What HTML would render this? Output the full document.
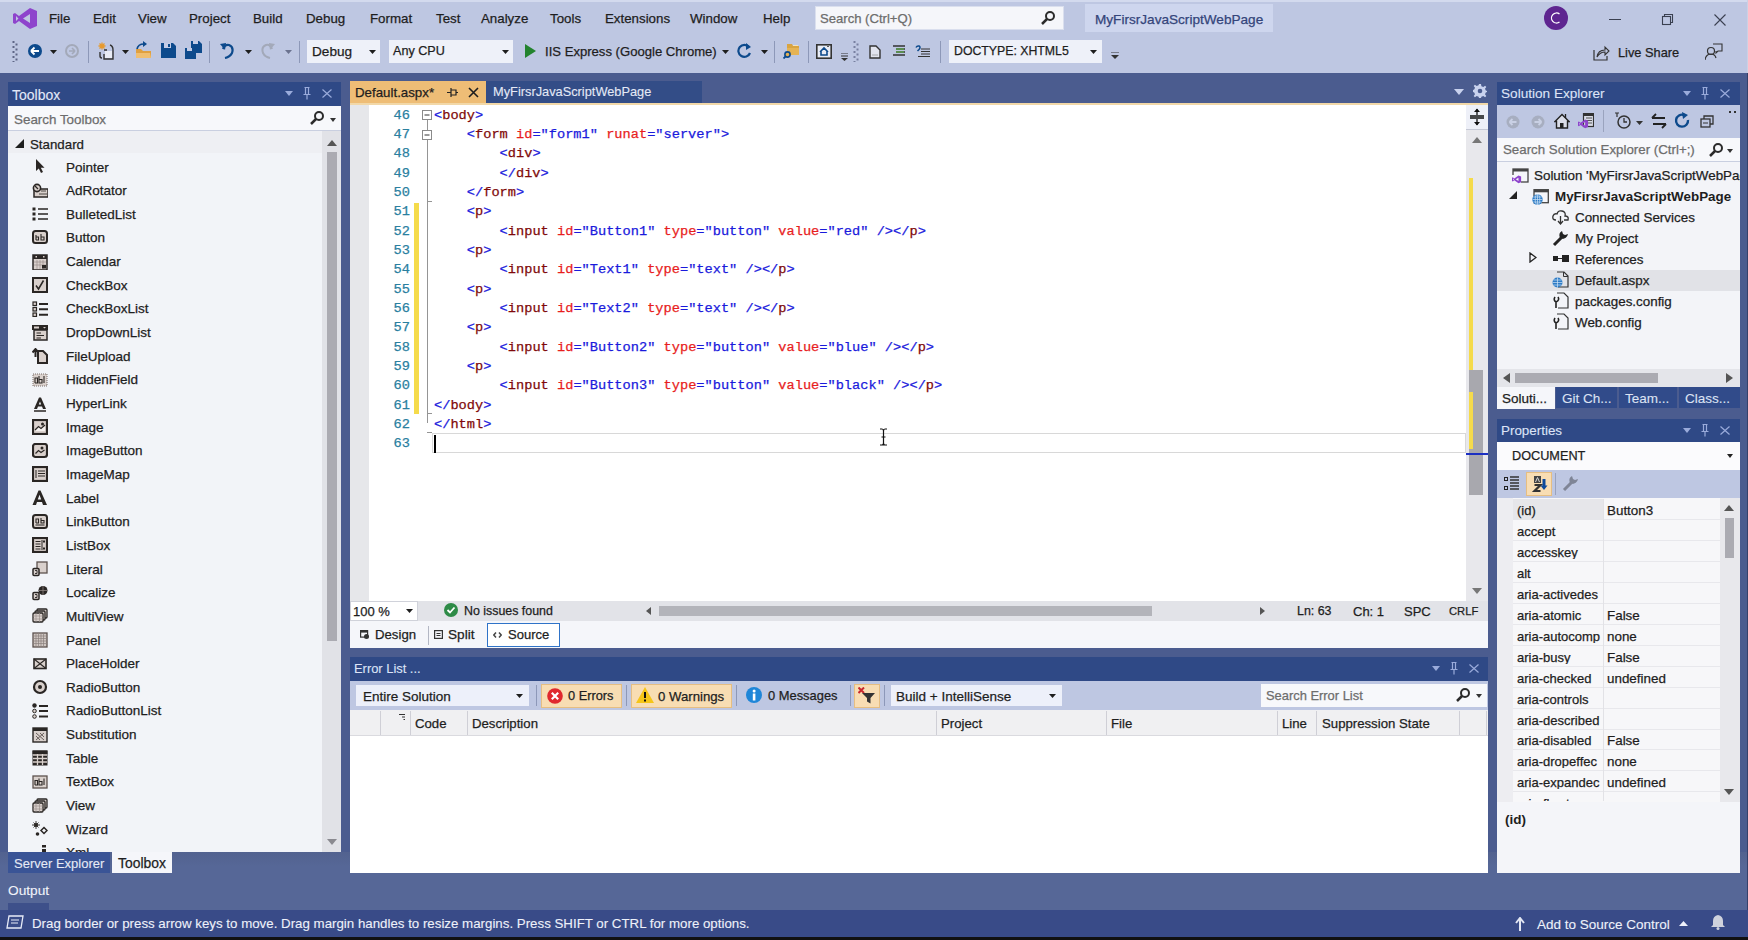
<!DOCTYPE html><html><head><meta charset="utf-8"><style>
html,body{margin:0;padding:0;width:1748px;height:940px;overflow:hidden;}
body{position:relative;background:#4B5C8F;font-family:"Liberation Sans",sans-serif;font-size:13px;color:#1E1E1E;}
.t{position:absolute;white-space:nowrap;line-height:1;-webkit-text-stroke:0.25px currentColor;}
.m{font-family:"Liberation Mono",monospace;}
</style></head><body>
<div style="position:absolute;left:0px;top:0px;width:1748px;height:73px;background:#BEC7E2;"></div>
<div style="position:absolute;left:0px;top:0px;width:1748px;height:2px;background:#D3DAEE;"></div>
<svg style="position:absolute;left:13px;top:7px;" width="25" height="23" viewBox="0 0 25 23"><path d="M17 1 L24 4 V19 L17 22 L6 14 L2 17 L0 16 V7 L2 6 L6 9 Z M17 7 L10 11.5 L17 16 Z M3 9 V14 L5.5 11.5 Z" fill="#8E44CC" fill-rule="evenodd"/></svg>
<div class="t" style="left:49px;top:12px;font-size:13.3px;color:#1E1E1E;">File</div>
<div class="t" style="left:93px;top:12px;font-size:13.3px;color:#1E1E1E;">Edit</div>
<div class="t" style="left:138px;top:12px;font-size:13.3px;color:#1E1E1E;">View</div>
<div class="t" style="left:189px;top:12px;font-size:13.3px;color:#1E1E1E;">Project</div>
<div class="t" style="left:253px;top:12px;font-size:13.3px;color:#1E1E1E;">Build</div>
<div class="t" style="left:306px;top:12px;font-size:13.3px;color:#1E1E1E;">Debug</div>
<div class="t" style="left:370px;top:12px;font-size:13.3px;color:#1E1E1E;">Format</div>
<div class="t" style="left:436px;top:12px;font-size:13.3px;color:#1E1E1E;">Test</div>
<div class="t" style="left:481px;top:12px;font-size:13.3px;color:#1E1E1E;">Analyze</div>
<div class="t" style="left:550px;top:12px;font-size:13.3px;color:#1E1E1E;">Tools</div>
<div class="t" style="left:605px;top:12px;font-size:13.3px;color:#1E1E1E;">Extensions</div>
<div class="t" style="left:690px;top:12px;font-size:13.3px;color:#1E1E1E;">Window</div>
<div class="t" style="left:763px;top:12px;font-size:13.3px;color:#1E1E1E;">Help</div>
<div style="position:absolute;left:815px;top:6px;width:249px;height:24px;background:#F5F6FA;border:1px solid #DADFEE;box-sizing:border-box;"></div>
<div class="t" style="left:820px;top:12px;color:#6D6D6D;font-size:13.1px;">Search (Ctrl+Q)</div>
<svg style="position:absolute;left:1040px;top:10px;" width="16" height="16" viewBox="0 0 16 16"><circle cx="10" cy="6" r="4" fill="none" stroke="#2B2B2B" stroke-width="2"/><path d="M7 9 L2 14" stroke="#2B2B2B" stroke-width="2.5"/></svg>
<div style="position:absolute;left:1085px;top:4px;width:188px;height:28px;background:#CED6EE;"></div>
<div class="t" style="left:1095px;top:13px;color:#34457A;font-size:13.6px;">MyFirsrJavaScriptWebPage</div>
<svg style="position:absolute;left:1544px;top:6px;" width="24" height="24" viewBox="0 0 24 24"><circle cx="12" cy="12" r="12" fill="#5E2590"/><path d="M15.5 8 A5 5 0 1 0 15.5 16" fill="none" stroke="#FFFFFF" stroke-width="1.3"/></svg>
<div style="position:absolute;left:1609px;top:19px;width:12px;height:1px;background:#3A4050;"></div>
<svg style="position:absolute;left:1661px;top:13px;" width="13" height="13" viewBox="0 0 13 13"><rect x="1.5" y="3.5" width="8" height="8" fill="none" stroke="#3A4050" stroke-width="1.1"/><path d="M3.5 3.5 V1.5 H11.5 V9.5 H9.5" fill="none" stroke="#3A4050" stroke-width="1.1"/></svg>
<svg style="position:absolute;left:1714px;top:14px;" width="12" height="12" viewBox="0 0 12 12"><path d="M0.5 0.5 L11.5 11.5 M11.5 0.5 L0.5 11.5" stroke="#3A4050" stroke-width="1.1"/></svg>
<svg style="position:absolute;left:12px;top:41px;" width="7" height="21" viewBox="0 0 7 21"><rect x="0.5" y="0.0" width="2" height="2" fill="#5E6686"/><rect x="3.5" y="2.5" width="2" height="2" fill="#5E6686"/><rect x="0.5" y="5.0" width="2" height="2" fill="#5E6686"/><rect x="3.5" y="7.5" width="2" height="2" fill="#5E6686"/><rect x="0.5" y="10.0" width="2" height="2" fill="#5E6686"/><rect x="3.5" y="12.5" width="2" height="2" fill="#5E6686"/><rect x="0.5" y="15.0" width="2" height="2" fill="#5E6686"/><rect x="3.5" y="17.5" width="2" height="2" fill="#5E6686"/><rect x="0.5" y="20.0" width="2" height="2" fill="#5E6686"/></svg>
<svg style="position:absolute;left:28px;top:44px;" width="14" height="14" viewBox="0 0 14 14"><circle cx="7" cy="7" r="7" fill="#0D4A8C"/><path d="M3 7 H11 M3 7 L6.5 3.5 M3 7 L6.5 10.5" stroke="#fff" stroke-width="1.8" fill="none"/></svg>
<svg style="position:absolute;left:50px;top:50px;" width="7" height="4" viewBox="0 0 7 4"><path d="M0 0 H7 L3.5 4 Z" fill="#1E1E1E"/></svg>
<svg style="position:absolute;left:65px;top:44px;" width="14" height="14" viewBox="0 0 14 14"><circle cx="7" cy="7" r="6" fill="none" stroke="#A3A9B9" stroke-width="2"/><path d="M4 7 H10 M10 7 L7 4 M10 7 L7 10" stroke="#A3A9B9" stroke-width="1.6" fill="none"/></svg>
<div style="position:absolute;left:88px;top:41px;width:1px;height:22px;background:#8D98B8;"></div>
<svg style="position:absolute;left:98px;top:42px;" width="16" height="18" viewBox="0 0 16 18"><path d="M4 0.5 V7.5 M0.5 4 H7.5 M1.5 1.5 L6.5 6.5 M6.5 1.5 L1.5 6.5" stroke="#E89A2C" stroke-width="1.3"/><path d="M6 8 H9 M12 3 Q15 4 15 8 V17 H6 V12" fill="none" stroke="#333" stroke-width="1.4"/><path d="M2 10 V14 Q2 16 4 16" stroke="#333" fill="none" stroke-width="1.4"/><rect x="7" y="9" width="7" height="7" fill="#E9ECF5"/></svg>
<svg style="position:absolute;left:122px;top:50px;" width="7" height="4" viewBox="0 0 7 4"><path d="M0 0 H7 L3.5 4 Z" fill="#1E1E1E"/></svg>
<svg style="position:absolute;left:135px;top:41px;" width="17" height="18" viewBox="0 0 17 18"><path d="M1 8 H6 L8 10 H16 V17 H1 Z" fill="#E0A040"/><path d="M1 12 H15 L16 17 H1 Z" fill="#F0BE70"/><path d="M2 8 Q3 3 9 3" stroke="#0D4A8C" fill="none" stroke-width="1.7"/><path d="M8 0 L12 3 L8 6 Z" fill="#0D4A8C"/></svg>
<svg style="position:absolute;left:161px;top:43px;" width="15" height="15" viewBox="0 0 15 15"><path d="M0 0 H12 L15 3 V15 H0 Z" fill="#0D4A8C"/><rect x="3" y="0" width="7" height="5" fill="#C4CDE7"/><rect x="7" y="1" width="2" height="3" fill="#0D4A8C"/></svg>
<svg style="position:absolute;left:185px;top:41px;" width="17" height="18" viewBox="0 0 17 18"><path d="M0 7 H9 L11 9 V18 H0 Z" fill="#0D4A8C"/><path d="M6 0 H14 L17 3 V12 H6 Z" fill="#0D4A8C"/><rect x="8" y="0" width="5" height="3" fill="#C4CDE7"/><rect x="2" y="7" width="5" height="3" fill="#C4CDE7"/></svg>
<div style="position:absolute;left:209px;top:41px;width:1px;height:22px;background:#8D98B8;"></div>
<svg style="position:absolute;left:220px;top:42px;" width="15" height="17" viewBox="0 0 15 17"><path d="M2.5 3 L5 9" stroke="#0D4A8C" stroke-width="0"/><path d="M3 7 Q5 2 9 3 Q14 5 12 11 Q10 15 5 16" stroke="#0D4A8C" stroke-width="2.2" fill="none"/><path d="M0 2 L6 1 L5 8 Z" fill="#0D4A8C"/></svg>
<svg style="position:absolute;left:245px;top:50px;" width="7" height="4" viewBox="0 0 7 4"><path d="M0 0 H7 L3.5 4 Z" fill="#1E1E1E"/></svg>
<svg style="position:absolute;left:260px;top:42px;" width="15" height="17" viewBox="0 0 15 17"><path d="M12 7 Q10 2 6 3 Q1 5 3 11 Q5 15 10 16" stroke="#A3A9B9" stroke-width="2" fill="none"/><path d="M15 2 L9 1 L10 8 Z" fill="#A3A9B9"/></svg>
<svg style="position:absolute;left:285px;top:50px;" width="7" height="4" viewBox="0 0 7 4"><path d="M0 0 H7 L3.5 4 Z" fill="#6B7390"/></svg>
<div style="position:absolute;left:299px;top:41px;width:1px;height:22px;background:#8D98B8;"></div>
<div style="position:absolute;left:307px;top:40px;width:73px;height:23px;background:#EEF1F9;"></div>
<div class="t" style="left:312px;top:45px;font-size:13.6px;">Debug</div>
<svg style="position:absolute;left:369px;top:50px;" width="7" height="4" viewBox="0 0 7 4"><path d="M0 0 H7 L3.5 4 Z" fill="#1E1E1E"/></svg>
<div style="position:absolute;left:389px;top:40px;width:124px;height:23px;background:#EEF1F9;"></div>
<div class="t" style="left:393px;top:45px;font-size:12.6px;">Any CPU</div>
<svg style="position:absolute;left:502px;top:50px;" width="7" height="4" viewBox="0 0 7 4"><path d="M0 0 H7 L3.5 4 Z" fill="#1E1E1E"/></svg>
<svg style="position:absolute;left:525px;top:44px;" width="11" height="14" viewBox="0 0 11 14"><path d="M0 0 L11 7 L0 14 Z" fill="#23832E"/></svg>
<div class="t" style="left:545px;top:45px;font-size:13.1px;">IIS Express (Google Chrome)</div>
<svg style="position:absolute;left:722px;top:50px;" width="7" height="4" viewBox="0 0 7 4"><path d="M0 0 H7 L3.5 4 Z" fill="#1E1E1E"/></svg>
<svg style="position:absolute;left:737px;top:43px;" width="15" height="16" viewBox="0 0 15 16"><path d="M12 4 A6 6 0 1 0 13 10" stroke="#0D4A8C" stroke-width="2.2" fill="none"/><path d="M9 0 L14 4 L9 7 Z" fill="#0D4A8C"/></svg>
<svg style="position:absolute;left:761px;top:50px;" width="7" height="4" viewBox="0 0 7 4"><path d="M0 0 H7 L3.5 4 Z" fill="#1E1E1E"/></svg>
<div style="position:absolute;left:774px;top:41px;width:1px;height:22px;background:#8D98B8;"></div>
<svg style="position:absolute;left:783px;top:43px;" width="16" height="16" viewBox="0 0 16 16"><path d="M4 1 H9 L10 3 H16 V12 H4 Z" fill="#D9A441"/><rect x="4" y="5" width="12" height="7" fill="#E5B354"/><path d="M10 2.5 H15" stroke="#F5E2B8" stroke-width="1"/><circle cx="4.5" cy="11.5" r="2.6" fill="#E5B354" stroke="#0D4A8C" stroke-width="1.6"/><path d="M2.5 13.5 L0.5 15.5" stroke="#0D4A8C" stroke-width="1.8"/></svg>
<div style="position:absolute;left:808px;top:41px;width:1px;height:22px;background:#8D98B8;"></div>
<svg style="position:absolute;left:816px;top:44px;" width="16" height="15" viewBox="0 0 16 15"><rect x="0.8" y="0.8" width="14.4" height="13.4" fill="#E8ECF6" stroke="#333" stroke-width="1.6"/><path d="M4 8 L8 4 L12 8 M5 7 V11 H11 V7" fill="none" stroke="#0D4A8C" stroke-width="1.6"/><path d="M11 2.5 H13" stroke="#333" stroke-width="0.8"/></svg>
<svg style="position:absolute;left:841px;top:53px;" width="7" height="8" viewBox="0 0 7 8"><path d="M0 0 H7 M0 3 H7" stroke="#333" stroke-width="1"/><path d="M0 5 H7 L3.5 8 Z" fill="#333"/></svg>
<svg style="position:absolute;left:853px;top:41px;" width="7" height="21" viewBox="0 0 7 21"><rect x="0.5" y="0.0" width="2" height="2" fill="#7880A0"/><rect x="3.5" y="2.5" width="2" height="2" fill="#7880A0"/><rect x="0.5" y="5.0" width="2" height="2" fill="#7880A0"/><rect x="3.5" y="7.5" width="2" height="2" fill="#7880A0"/><rect x="0.5" y="10.0" width="2" height="2" fill="#7880A0"/><rect x="3.5" y="12.5" width="2" height="2" fill="#7880A0"/><rect x="0.5" y="15.0" width="2" height="2" fill="#7880A0"/><rect x="3.5" y="17.5" width="2" height="2" fill="#7880A0"/><rect x="0.5" y="20.0" width="2" height="2" fill="#7880A0"/></svg>
<svg style="position:absolute;left:869px;top:45px;" width="12" height="14" viewBox="0 0 12 14"><path d="M1 1 H7 L11 5 V13 H1 Z" fill="#E2E4EE" stroke="#333" stroke-width="1.4"/><path d="M3 10 H9" stroke="#999" stroke-width="0.8"/></svg>
<svg style="position:absolute;left:892px;top:45px;" width="14" height="12" viewBox="0 0 14 12"><path d="M1 1 H13 M4 4 H13 M4 7 H13 M1 10 H13" stroke="#333" stroke-width="1.4"/><path d="M4 4 H12 M4 7 H12" stroke="#5EA04E" stroke-width="1.6"/></svg>
<svg style="position:absolute;left:915px;top:45px;" width="16" height="13" viewBox="0 0 16 13"><path d="M6 4 H15 M6 6.5 H15 M6 9 H15 M3 11.5 H15" stroke="#333" stroke-width="1.2"/><path d="M1 2.5 Q2 0.5 4 1 Q6 2 4 4.5 L2.5 6" stroke="#0D4A8C" fill="none" stroke-width="1.5"/></svg>
<div style="position:absolute;left:940px;top:41px;width:1px;height:22px;background:#8D98B8;"></div>
<div style="position:absolute;left:949px;top:40px;width:153px;height:23px;background:#EEF1F9;"></div>
<div class="t" style="left:954px;top:45px;font-size:12.3px;">DOCTYPE: XHTML5</div>
<svg style="position:absolute;left:1090px;top:50px;" width="7" height="4" viewBox="0 0 7 4"><path d="M0 0 H7 L3.5 4 Z" fill="#1E1E1E"/></svg>
<svg style="position:absolute;left:1111px;top:52px;" width="8" height="9" viewBox="0 0 8 9"><path d="M0 0 H8" stroke="#333" stroke-width="1"/><path d="M0 3 H8 L4 7 Z" fill="#333"/></svg>
<svg style="position:absolute;left:1593px;top:44px;" width="17" height="17" viewBox="0 0 17 17"><path d="M1 6 V16 H14 V12" stroke="#333" fill="none" stroke-width="1.2"/><path d="M4 13 Q5 6 12 6 V3 L16 7 L12 11 V8 Q7 8 4 13 Z" fill="none" stroke="#333" stroke-width="1.1"/></svg>
<div class="t" style="left:1618px;top:47px;font-size:12.8px;">Live Share</div>
<svg style="position:absolute;left:1705px;top:43px;" width="18" height="18" viewBox="0 0 18 18"><circle cx="6" cy="8" r="3.5" fill="none" stroke="#333" stroke-width="1.2"/><path d="M0 17 Q1 11 6 11 Q10 11 11 15" fill="none" stroke="#333" stroke-width="1.2"/><path d="M8 1 H17 V8 H13 L11 10 V8" fill="none" stroke="#333" stroke-width="1.1"/></svg>
<div style="position:absolute;left:0px;top:852px;width:1748px;height:58px;background:linear-gradient(#52628F,#566797 25%);"></div>
<div style="position:absolute;left:8px;top:82px;width:333px;height:24px;background:#2F4986;"></div>
<div class="t" style="left:12px;top:88px;color:#E2E8F8;-webkit-text-stroke:0.1px;font-size:14px;">Toolbox</div>
<svg style="position:absolute;left:285px;top:91px;" width="8" height="5" viewBox="0 0 8 5"><path d="M0 0 H8 L4 5 Z" fill="#9AABDB"/></svg>
<svg style="position:absolute;left:303px;top:87px;" width="8" height="13" viewBox="0 0 8 13"><path d="M1.5 0.5 H6.5 M2.5 0.5 V7 M5.5 0.5 V7 M0.5 7.5 H7.5 M4 7.5 V12.5" fill="none" stroke="#9AABDB" stroke-width="1.2"/></svg>
<svg style="position:absolute;left:322px;top:89px;" width="10" height="9" viewBox="0 0 10 9"><path d="M0.5 0.5 L9.5 8.5 M9.5 0.5 L0.5 8.5" stroke="#9AABDB" stroke-width="1.2"/></svg>
<div style="position:absolute;left:8px;top:106px;width:333px;height:25px;background:#F7F8FB;border-bottom:1px solid #C9CFE0;box-sizing:border-box;"></div>
<div class="t" style="left:14px;top:113px;color:#6D6D6D;font-size:13.4px;">Search Toolbox</div>
<svg style="position:absolute;left:309px;top:110px;" width="16" height="16" viewBox="0 0 16 16"><circle cx="10" cy="6" r="4" fill="none" stroke="#2B2B2B" stroke-width="2"/><path d="M7 9 L2 14" stroke="#2B2B2B" stroke-width="2.5"/></svg>
<svg style="position:absolute;left:330px;top:118px;" width="6" height="4" viewBox="0 0 6 4"><path d="M0 0 H6 L3 4 Z" fill="#333"/></svg>
<div style="position:absolute;left:8px;top:131px;width:314px;height:721px;background:#F2F4F8;"></div>
<div style="position:absolute;left:8px;top:131px;width:314px;height:22px;background:#EEEFF3;"></div>
<svg style="position:absolute;left:15px;top:139px;" width="9" height="9" viewBox="0 0 9 9"><path d="M9 0 V9 H0 Z" fill="#1E1E1E"/></svg>
<div class="t" style="left:30px;top:138px;font-size:13.3px;">Standard</div>
<div style="position:absolute;left:322px;top:131px;width:19px;height:721px;background:#E1E2E7;"></div>
<svg style="position:absolute;left:327px;top:140px;" width="10" height="6" viewBox="0 0 10 6"><path d="M0 6 H10 L5 0 Z" fill="#555"/></svg>
<div style="position:absolute;left:327px;top:152px;width:10px;height:489px;background:#ABABB2;"></div>
<svg style="position:absolute;left:327px;top:839px;" width="10" height="6" viewBox="0 0 10 6"><path d="M0 0 H10 L5 6 Z" fill="#8A8A90"/></svg>
<svg style="position:absolute;left:32px;top:159px;" width="16" height="16" viewBox="0 0 16 16"><path d="M4 0 V12 L6.8 9.6 L9 14 L11 13 L8.8 8.8 H12.5 Z" fill="#2A2624"/></svg>
<div class="t" style="left:66px;top:160.5px;font-size:13.5px;">Pointer</div>
<svg style="position:absolute;left:32px;top:183px;" width="16" height="16" viewBox="0 0 16 16"><rect x="2" y="6" width="14" height="8" fill="#D9D0CC" stroke="#2A2624" stroke-width="1.5"/><path d="M7 11 H15 M9 8 H14" stroke="#2A2624" stroke-width="0.8"/><circle cx="5" cy="5" r="3.6" fill="#D9D0CC" stroke="#2A2624" stroke-width="1.6"/><path d="M3 3 L6 6" stroke="#2A2624" stroke-width="1.2"/></svg>
<div class="t" style="left:66px;top:184.15px;font-size:13.5px;">AdRotator</div>
<svg style="position:absolute;left:32px;top:206px;" width="16" height="16" viewBox="0 0 16 16"><rect x="0.5" y="1.5" width="3" height="3" fill="#2A2624"/><rect x="0.5" y="6.5" width="3" height="3" fill="#2A2624"/><rect x="0.5" y="11.5" width="3" height="3" fill="#2A2624"/><path d="M6 3 H16 M6 8 H16 M6 13 H16" stroke="#2A2624" stroke-width="1.4"/></svg>
<div class="t" style="left:66px;top:207.8px;font-size:13.5px;">BulletedList</div>
<svg style="position:absolute;left:32px;top:230px;" width="16" height="16" viewBox="0 0 16 16"><rect x="1" y="1" width="14" height="12" rx="2.5" fill="#D9D0CC" stroke="#2A2624" stroke-width="2"/><path d="M4 10 V5 M4 7 H6.5 V10 H4 M9 4 V10 H12 V7 H9" fill="none" stroke="#2A2624" stroke-width="1.1"/></svg>
<div class="t" style="left:66px;top:231.45px;font-size:13.5px;">Button</div>
<svg style="position:absolute;left:32px;top:254px;" width="16" height="16" viewBox="0 0 16 16"><rect x="1" y="1" width="14" height="15" fill="#D9D0CC" stroke="#2A2624" stroke-width="1.5"/><rect x="1" y="1" width="14" height="4" fill="#2A2624"/><rect x="3.5" y="2" width="1.5" height="1.5" fill="#D9D0CC"/><rect x="11" y="2" width="1.5" height="1.5" fill="#D9D0CC"/><path d="M2 8 H14 M2 11 H14 M5 6 V15 M8 6 V15 M11 6 V15" stroke="#9B918C" stroke-width="0.7"/><rect x="10" y="11" width="4" height="3.5" fill="#2A2624"/></svg>
<div class="t" style="left:66px;top:255.1px;font-size:13.5px;">Calendar</div>
<svg style="position:absolute;left:32px;top:277px;" width="16" height="16" viewBox="0 0 16 16"><rect x="1" y="1" width="14" height="14" fill="#D9D0CC" stroke="#2A2624" stroke-width="2"/><path d="M4 8.5 L6.5 12 L11.5 3.5" stroke="#2A2624" stroke-width="1.5" fill="none"/></svg>
<div class="t" style="left:66px;top:278.75px;font-size:13.5px;">CheckBox</div>
<svg style="position:absolute;left:32px;top:301px;" width="16" height="16" viewBox="0 0 16 16"><rect x="1" y="1" width="3.5" height="3.5" fill="#D9D0CC" stroke="#2A2624" stroke-width="1.2"/><rect x="1" y="6.5" width="3.5" height="3.5" fill="#D9D0CC" stroke="#2A2624" stroke-width="1.2"/><rect x="1" y="12" width="3.5" height="3.5" fill="#D9D0CC" stroke="#2A2624" stroke-width="1.2"/><path d="M7 3 H16 M7 8.3 H16 M7 13.7 H16" stroke="#2A2624" stroke-width="2"/></svg>
<div class="t" style="left:66px;top:302.4px;font-size:13.5px;">CheckBoxList</div>
<svg style="position:absolute;left:32px;top:325px;" width="16" height="16" viewBox="0 0 16 16"><rect x="0" y="0" width="16" height="5" fill="#2A2624"/><rect x="2" y="1.5" width="5" height="2" fill="#D9D0CC"/><path d="M11 2 H14 L12.5 3.5 Z" fill="#D9D0CC"/><rect x="2" y="5" width="13" height="10" fill="#D9D0CC" stroke="#2A2624" stroke-width="1.5"/><path d="M4.5 8 H9 M4.5 10.5 H12 M4.5 13 H9" stroke="#2A2624" stroke-width="1"/></svg>
<div class="t" style="left:66px;top:326.05px;font-size:13.5px;">DropDownList</div>
<svg style="position:absolute;left:32px;top:348px;" width="16" height="16" viewBox="0 0 16 16"><path d="M6 3 H11 L15 7 V15 H6 Z" fill="#D9D0CC" stroke="#2A2624" stroke-width="2"/><path d="M3.5 9 V1.5 M0.5 4.5 L3.5 1 L6.5 4.5" stroke="#2A2624" stroke-width="2" fill="none"/></svg>
<div class="t" style="left:66px;top:349.7px;font-size:13.5px;">FileUpload</div>
<svg style="position:absolute;left:32px;top:372px;" width="16" height="16" viewBox="0 0 16 16"><rect x="1" y="2" width="14" height="12" fill="#D9D0CC" stroke="#7A6E6A" stroke-width="1" stroke-dasharray="1 1"/><path d="M3 11 V6 H5.5 V11 H3 M7 4 V11 H10 V7.5 H7 M12 4 V11" fill="none" stroke="#2A2624" stroke-width="1.1"/></svg>
<div class="t" style="left:66px;top:373.35px;font-size:13.5px;">HiddenField</div>
<svg style="position:absolute;left:32px;top:396px;" width="16" height="16" viewBox="0 0 16 16"><path d="M2 13 L7 1.5 H9 L14 13 H11 L10 10.5 H6 L5 13 Z M6.8 8.5 H9.2 L8 5.5 Z" fill="#2A2624" fill-rule="evenodd"/><path d="M2 15 H14" stroke="#2A2624" stroke-width="1.5"/></svg>
<div class="t" style="left:66px;top:397.0px;font-size:13.5px;">HyperLink</div>
<svg style="position:absolute;left:32px;top:419px;" width="16" height="16" viewBox="0 0 16 16"><rect x="1" y="1" width="14" height="14" fill="#D9D0CC" stroke="#2A2624" stroke-width="2.2"/><path d="M3 12 L6.5 8 L9 10 L13 7 V12 Z" fill="#F4F0EE"/><circle cx="10.5" cy="5" r="1.5" fill="#2A2624"/><path d="M3 11 L6.5 7.5 L9 9.5 L13 6" stroke="#2A2624" stroke-width="1.2" fill="none"/></svg>
<div class="t" style="left:66px;top:420.65px;font-size:13.5px;">Image</div>
<svg style="position:absolute;left:32px;top:443px;" width="16" height="16" viewBox="0 0 16 16"><rect x="1" y="1" width="14" height="13" rx="2.5" fill="#D9D0CC" stroke="#2A2624" stroke-width="2.2"/><circle cx="10" cy="5" r="1.5" fill="#2A2624"/><path d="M3.5 10.5 L6.5 7.5 L9 9.5 L12.5 7" stroke="#2A2624" stroke-width="1.2" fill="none"/></svg>
<div class="t" style="left:66px;top:444.3px;font-size:13.5px;">ImageButton</div>
<svg style="position:absolute;left:32px;top:466px;" width="16" height="16" viewBox="0 0 16 16"><rect x="1" y="1" width="14" height="14" fill="#D9D0CC" stroke="#2A2624" stroke-width="2.2"/><path d="M4 4 V12 M6 5 H13 M6 7.5 H13 M6 10 H13" stroke="#2A2624" stroke-width="1"/></svg>
<div class="t" style="left:66px;top:467.95px;font-size:13.5px;">ImageMap</div>
<svg style="position:absolute;left:32px;top:490px;" width="16" height="16" viewBox="0 0 16 16"><path d="M0.5 15 L6.5 0.5 H8.5 L15 15 H11 L10 12 H5 L4 15 Z M5.8 9.5 H9.2 L7.5 4.8 Z" fill="#2A2624" fill-rule="evenodd"/></svg>
<div class="t" style="left:66px;top:491.6px;font-size:13.5px;">Label</div>
<svg style="position:absolute;left:32px;top:514px;" width="16" height="16" viewBox="0 0 16 16"><rect x="1" y="1" width="14" height="13" rx="2.5" fill="#D9D0CC" stroke="#2A2624" stroke-width="2"/><path d="M4 9 V5 H6.5 V9 H4 M9 4 V9 H12 V6.5 H9 M3.5 11 H12.5" fill="none" stroke="#2A2624" stroke-width="1.1"/></svg>
<div class="t" style="left:66px;top:515.25px;font-size:13.5px;">LinkButton</div>
<svg style="position:absolute;left:32px;top:537px;" width="16" height="16" viewBox="0 0 16 16"><rect x="1" y="1" width="14" height="14" fill="#D9D0CC" stroke="#2A2624" stroke-width="2.2"/><path d="M3.5 4.5 H8.5 M3.5 7 H8.5 M3.5 9.5 H8.5 M3.5 12 H8.5 M10 3 V13" stroke="#2A2624" stroke-width="1"/><rect x="11" y="3.5" width="2" height="2" fill="#2A2624"/><rect x="11" y="10.5" width="2" height="2" fill="#2A2624"/></svg>
<div class="t" style="left:66px;top:538.9px;font-size:13.5px;">ListBox</div>
<svg style="position:absolute;left:32px;top:561px;" width="16" height="16" viewBox="0 0 16 16"><rect x="5" y="1" width="10" height="11" fill="#D9D0CC" stroke="#5C524E" stroke-width="1.3"/><rect x="1" y="7.5" width="6" height="7" rx="1" fill="#D9D0CC" stroke="#2A2624" stroke-width="1.5"/><path d="M3 9.5 H5 V12.5 H3" fill="none" stroke="#2A2624" stroke-width="0.9"/></svg>
<div class="t" style="left:66px;top:562.55px;font-size:13.5px;">Literal</div>
<svg style="position:absolute;left:32px;top:585px;" width="16" height="16" viewBox="0 0 16 16"><circle cx="11" cy="5.5" r="4.5" fill="#2A2624"/><path d="M11 1 V10 M6.5 5.5 H15.5" stroke="#8B817D" stroke-width="0.8"/><rect x="1" y="7.5" width="6" height="7" rx="1" fill="#D9D0CC" stroke="#2A2624" stroke-width="1.5"/><path d="M3 9.5 H5 V12.5 H3" fill="none" stroke="#2A2624" stroke-width="0.9"/></svg>
<div class="t" style="left:66px;top:586.2px;font-size:13.5px;">Localize</div>
<svg style="position:absolute;left:32px;top:608px;" width="16" height="16" viewBox="0 0 16 16"><rect x="5" y="1" width="10" height="9" rx="1" fill="#D9D0CC" stroke="#2A2624" stroke-width="1.3"/><rect x="3" y="3" width="10" height="9" rx="1" fill="#D9D0CC" stroke="#2A2624" stroke-width="1.3"/><rect x="1" y="5" width="10" height="9" rx="1" fill="#D9D0CC" stroke="#2A2624" stroke-width="1.3"/><path d="M1 8 H11 M1 11 H11 M4 5 V14 M7.5 5 V14" stroke="#9B918C" stroke-width="0.7"/></svg>
<div class="t" style="left:66px;top:609.85px;font-size:13.5px;">MultiView</div>
<svg style="position:absolute;left:32px;top:632px;" width="16" height="16" viewBox="0 0 16 16"><rect x="1" y="1" width="14" height="14" fill="#CFC6C2" stroke="#5C524E" stroke-width="1.3"/><path d="M4 1 V15 M6.5 1 V15 M9 1 V15 M11.5 1 V15 M1 4 H15 M1 6.5 H15 M1 9 H15 M1 11.5 H15" stroke="#8A807C" stroke-width="0.7"/></svg>
<div class="t" style="left:66px;top:633.5px;font-size:13.5px;">Panel</div>
<svg style="position:absolute;left:32px;top:656px;" width="16" height="16" viewBox="0 0 16 16"><rect x="2" y="3" width="12" height="9.5" fill="#D9D0CC" stroke="#2A2624" stroke-width="1.6"/><path d="M2 3 L14 12.5 M14 3 L2 12.5" stroke="#2A2624" stroke-width="1.1"/></svg>
<div class="t" style="left:66px;top:657.15px;font-size:13.5px;">PlaceHolder</div>
<svg style="position:absolute;left:32px;top:679px;" width="16" height="16" viewBox="0 0 16 16"><circle cx="8" cy="8" r="6" fill="#D9D0CC" stroke="#2A2624" stroke-width="2.2"/><circle cx="8" cy="8" r="2" fill="#2A2624"/></svg>
<div class="t" style="left:66px;top:680.8px;font-size:13.5px;">RadioButton</div>
<svg style="position:absolute;left:32px;top:703px;" width="16" height="16" viewBox="0 0 16 16"><circle cx="2.5" cy="2.5" r="2.2" fill="#2A2624"/><circle cx="2.5" cy="8" r="1.8" fill="#D9D0CC" stroke="#2A2624" stroke-width="1"/><circle cx="2.5" cy="13.5" r="1.8" fill="#D9D0CC" stroke="#2A2624" stroke-width="1"/><path d="M7 3 H16 M7 8 H16 M7 13.5 H16" stroke="#2A2624" stroke-width="2"/></svg>
<div class="t" style="left:66px;top:704.45px;font-size:13.5px;">RadioButtonList</div>
<svg style="position:absolute;left:32px;top:727px;" width="16" height="16" viewBox="0 0 16 16"><rect x="1" y="1" width="14" height="14" fill="#D9D0CC" stroke="#2A2624" stroke-width="1.4"/><rect x="1" y="1" width="14" height="3" fill="#2A2624"/><path d="M4 6 L12 13 M4 9 L8 13 M8 6 L12 10 M4 13 L12 6" stroke="#6B615D" stroke-width="1"/></svg>
<div class="t" style="left:66px;top:728.1px;font-size:13.5px;">Substitution</div>
<svg style="position:absolute;left:32px;top:750px;" width="16" height="16" viewBox="0 0 16 16"><rect x="0.5" y="0.5" width="15" height="15" fill="#2A2624"/><path d="M1 5 H15 M1 8.5 H15 M1 12 H15 M5.5 1 V15 M10.5 1 V15" stroke="#D9D0CC" stroke-width="1.3"/><rect x="0.5" y="0.5" width="15" height="3.5" fill="#2A2624"/></svg>
<div class="t" style="left:66px;top:751.75px;font-size:13.5px;">Table</div>
<svg style="position:absolute;left:32px;top:774px;" width="16" height="16" viewBox="0 0 16 16"><rect x="1" y="2" width="14" height="12" fill="#D9D0CC" stroke="#5C524E" stroke-width="1.3"/><path d="M3 11 V6.5 H5.5 V11 H3 M7 4.5 V11 H10 V7.5 H7 M12 4.5 V11" fill="none" stroke="#2A2624" stroke-width="1.1"/></svg>
<div class="t" style="left:66px;top:775.4px;font-size:13.5px;">TextBox</div>
<svg style="position:absolute;left:32px;top:798px;" width="16" height="16" viewBox="0 0 16 16"><rect x="5" y="1" width="10" height="9" rx="1" fill="#D9D0CC" stroke="#2A2624" stroke-width="1.3"/><rect x="3" y="3" width="10" height="9" rx="1" fill="#D9D0CC" stroke="#2A2624" stroke-width="1.3"/><rect x="1" y="5" width="10" height="9" rx="1" fill="#D9D0CC" stroke="#2A2624" stroke-width="1.3"/><path d="M1 8 H11 M1 11 H11 M4 5 V14 M7.5 5 V14" stroke="#9B918C" stroke-width="0.7"/></svg>
<div class="t" style="left:66px;top:799.05px;font-size:13.5px;">View</div>
<svg style="position:absolute;left:32px;top:821px;" width="16" height="16" viewBox="0 0 16 16"><circle cx="4" cy="4" r="2" fill="#2A2624"/><path d="M4 0 V8 M0 4 H8 M1.5 1.5 L6.5 6.5 M6.5 1.5 L1.5 6.5" stroke="#2A2624" stroke-width="0.9"/><path d="M12 6.5 L15 9.5 L12 12.5 L9 9.5 Z" fill="none" stroke="#2A2624" stroke-width="1.5"/><circle cx="5.5" cy="13" r="1.8" fill="#2A2624"/></svg>
<div class="t" style="left:66px;top:822.7px;font-size:13.5px;">Wizard</div>
<svg style="position:absolute;left:32px;top:845px;" width="16" height="16" viewBox="0 0 16 16"><rect x="1" y="10" width="6" height="6" rx="2" fill="#2A2624"/><rect x="10" y="4" width="4" height="12" fill="#2A2624"/><rect x="10" y="0" width="4" height="2.5" fill="#2A2624"/></svg>
<div class="t" style="left:66px;top:846.35px;font-size:13.5px;">Xml</div>
<div style="position:absolute;left:8px;top:852px;width:102px;height:21px;background:#3A5496;"></div>
<div class="t" style="left:14px;top:857px;color:#E6EAF5;-webkit-text-stroke:0.1px;font-size:13px;">Server Explorer</div>
<div style="position:absolute;left:112px;top:852px;width:60px;height:21px;background:#F5F6FA;"></div>
<div class="t" style="left:118px;top:857px;font-size:13.9px;">Toolbox</div>
<div class="t" style="left:8px;top:884px;color:#F1F3FA;-webkit-text-stroke:0.1px;font-size:13.7px;">Output</div>
<div style="position:absolute;left:8px;top:903px;width:41px;height:7px;background:#3E508A;"></div>
<div style="position:absolute;left:0px;top:910px;width:1748px;height:27px;background:#394B88;"></div>
<div style="position:absolute;left:0px;top:937px;width:1748px;height:3px;background:#111;"></div>
<svg style="position:absolute;left:6px;top:914px;" width="18" height="16" viewBox="0 0 18 16"><path d="M3 2 H17 L15 14 H1 Z" fill="none" stroke="#E8ECF8" stroke-width="1.3"/><path d="M5 6 H13 M5 9 H12" stroke="#E8ECF8"/></svg>
<div class="t" style="left:32px;top:917px;color:#EEF1FA;-webkit-text-stroke:0.1px;font-size:13.3px;">Drag border or press arrow keys to move. Drag margin handles to resize margins. Press SHIFT or CTRL for more options.</div>
<svg style="position:absolute;left:1515px;top:917px;" width="10" height="14" viewBox="0 0 10 14"><path d="M5 14 V2 M1 6 L5 1 L9 6" fill="none" stroke="#E2E6F2" stroke-width="2"/></svg>
<div class="t" style="left:1537px;top:918px;color:#EEF1FA;-webkit-text-stroke:0.1px;font-size:13.5px;">Add to Source Control</div>
<svg style="position:absolute;left:1679px;top:921px;" width="9" height="5" viewBox="0 0 9 5"><path d="M0 5 H9 L4.5 0 Z" fill="#EEF1FA"/></svg>
<svg style="position:absolute;left:1710px;top:914px;" width="16" height="16" viewBox="0 0 16 16"><path d="M8 1 Q3 2 3 7 V11 L1 13 H15 L13 11 V7 Q13 2 8 1 Z" fill="#CFD2DC"/><circle cx="8" cy="14.5" r="1.5" fill="#CFD2DC"/></svg>
<div style="position:absolute;left:350px;top:81px;width:136px;height:23px;background:#EEBD76;"></div>
<div class="t" style="left:355px;top:86px;font-size:13.3px;color:#1E1E1E;">Default.aspx*</div>
<svg style="position:absolute;left:447px;top:87px;" width="11" height="11" viewBox="0 0 11 11"><path d="M0 5.5 H4 M4 1 V10 M4 3 H9 V8 H4 M9 5.5 H11" fill="none" stroke="#222" stroke-width="1.2"/></svg>
<svg style="position:absolute;left:468px;top:87px;" width="11" height="11" viewBox="0 0 11 11"><path d="M1 1 L10 10 M10 1 L1 10" stroke="#1E1E1E" stroke-width="1.6"/></svg>
<div style="position:absolute;left:486px;top:81px;width:216px;height:23px;background:#334D87;"></div>
<div class="t" style="left:493px;top:86px;font-size:12.8px;color:#E4E9F6;-webkit-text-stroke:0.1px;">MyFirsrJavaScriptWebPage</div>
<svg style="position:absolute;left:1454px;top:89px;" width="10" height="6" viewBox="0 0 10 6"><path d="M0 0 H10 L5 6 Z" fill="#C9D2EE"/></svg>
<svg style="position:absolute;left:1473px;top:84px;" width="14" height="14" viewBox="0 0 14 14"><path d="M6 0 H8 L8.4 2.2 L10.3 3 L12.1 1.7 L13.3 2.9 L12 4.7 L12.8 6.6 L14 7 V8 L12.8 8.4 L12 10.3 L13.3 12.1 L12.1 13.3 L10.3 12 L8.4 12.8 L8 14 H6 L5.6 12.8 L3.7 12 L1.9 13.3 L0.7 12.1 L2 10.3 L1.2 8.4 L0 8 V6 L1.2 5.6 L2 3.7 L0.7 1.9 L1.9 0.7 L3.7 2 L5.6 1.2 Z" fill="#C9D2EE"/><circle cx="7" cy="7" r="2.3" fill="#4B5C8F"/></svg>
<div style="position:absolute;left:350px;top:103px;width:1138px;height:2px;background:#F2D8A8;"></div>
<div style="position:absolute;left:350px;top:105px;width:1116px;height:496px;background:#FFFFFF;"></div>
<div style="position:absolute;left:350px;top:105px;width:19px;height:496px;background:#E6E7EA;"></div>
<div class="t" style="left:390px;top:108.5px;width:20px;text-align:right;color:#2A809F;font-family:'Liberation Mono',monospace;font-size:13.67px;">46</div>
<div class="t" style="left:434.0px;top:108.5px;font-family:'Liberation Mono',monospace;font-size:13.67px;"><span style="color:#1A1ADC">&lt;</span><span style="color:#7F0A0A">body</span><span style="color:#1A1ADC">&gt;</span></div>
<div class="t" style="left:390px;top:127.85px;width:20px;text-align:right;color:#2A809F;font-family:'Liberation Mono',monospace;font-size:13.67px;">47</div>
<div class="t" style="left:466.8px;top:127.85px;font-family:'Liberation Mono',monospace;font-size:13.67px;"><span style="color:#1A1ADC">&lt;</span><span style="color:#7F0A0A">form</span> <span style="color:#E81E1E">id</span><span style="color:#1A1ADC">=</span><span style="color:#1A1ADC">"form1"</span> <span style="color:#E81E1E">runat</span><span style="color:#1A1ADC">=</span><span style="color:#1A1ADC">"server"</span><span style="color:#1A1ADC">&gt;</span></div>
<div class="t" style="left:390px;top:147.2px;width:20px;text-align:right;color:#2A809F;font-family:'Liberation Mono',monospace;font-size:13.67px;">48</div>
<div class="t" style="left:499.6px;top:147.2px;font-family:'Liberation Mono',monospace;font-size:13.67px;"><span style="color:#1A1ADC">&lt;</span><span style="color:#7F0A0A">div</span><span style="color:#1A1ADC">&gt;</span></div>
<div class="t" style="left:390px;top:166.55px;width:20px;text-align:right;color:#2A809F;font-family:'Liberation Mono',monospace;font-size:13.67px;">49</div>
<div class="t" style="left:499.6px;top:166.55px;font-family:'Liberation Mono',monospace;font-size:13.67px;"><span style="color:#1A1ADC">&lt;/</span><span style="color:#7F0A0A">div</span><span style="color:#1A1ADC">&gt;</span></div>
<div class="t" style="left:390px;top:185.9px;width:20px;text-align:right;color:#2A809F;font-family:'Liberation Mono',monospace;font-size:13.67px;">50</div>
<div class="t" style="left:466.8px;top:185.9px;font-family:'Liberation Mono',monospace;font-size:13.67px;"><span style="color:#1A1ADC">&lt;/</span><span style="color:#7F0A0A">form</span><span style="color:#1A1ADC">&gt;</span></div>
<div class="t" style="left:390px;top:205.25px;width:20px;text-align:right;color:#2A809F;font-family:'Liberation Mono',monospace;font-size:13.67px;">51</div>
<div class="t" style="left:466.8px;top:205.25px;font-family:'Liberation Mono',monospace;font-size:13.67px;"><span style="color:#1A1ADC">&lt;</span><span style="color:#7F0A0A">p</span><span style="color:#1A1ADC">&gt;</span></div>
<div class="t" style="left:390px;top:224.6px;width:20px;text-align:right;color:#2A809F;font-family:'Liberation Mono',monospace;font-size:13.67px;">52</div>
<div class="t" style="left:499.6px;top:224.6px;font-family:'Liberation Mono',monospace;font-size:13.67px;"><span style="color:#1A1ADC">&lt;</span><span style="color:#7F0A0A">input</span> <span style="color:#E81E1E">id</span><span style="color:#1A1ADC">=</span><span style="color:#1A1ADC">"Button1"</span> <span style="color:#E81E1E">type</span><span style="color:#1A1ADC">=</span><span style="color:#1A1ADC">"button"</span> <span style="color:#E81E1E">value</span><span style="color:#1A1ADC">=</span><span style="color:#1A1ADC">"red"</span> <span style="color:#1A1ADC">/&gt;</span><span style="color:#1A1ADC">&lt;/</span><span style="color:#7F0A0A">p</span><span style="color:#1A1ADC">&gt;</span></div>
<div class="t" style="left:390px;top:243.95px;width:20px;text-align:right;color:#2A809F;font-family:'Liberation Mono',monospace;font-size:13.67px;">53</div>
<div class="t" style="left:466.8px;top:243.95px;font-family:'Liberation Mono',monospace;font-size:13.67px;"><span style="color:#1A1ADC">&lt;</span><span style="color:#7F0A0A">p</span><span style="color:#1A1ADC">&gt;</span></div>
<div class="t" style="left:390px;top:263.3px;width:20px;text-align:right;color:#2A809F;font-family:'Liberation Mono',monospace;font-size:13.67px;">54</div>
<div class="t" style="left:499.6px;top:263.3px;font-family:'Liberation Mono',monospace;font-size:13.67px;"><span style="color:#1A1ADC">&lt;</span><span style="color:#7F0A0A">input</span> <span style="color:#E81E1E">id</span><span style="color:#1A1ADC">=</span><span style="color:#1A1ADC">"Text1"</span> <span style="color:#E81E1E">type</span><span style="color:#1A1ADC">=</span><span style="color:#1A1ADC">"text"</span> <span style="color:#1A1ADC">/&gt;</span><span style="color:#1A1ADC">&lt;/</span><span style="color:#7F0A0A">p</span><span style="color:#1A1ADC">&gt;</span></div>
<div class="t" style="left:390px;top:282.65px;width:20px;text-align:right;color:#2A809F;font-family:'Liberation Mono',monospace;font-size:13.67px;">55</div>
<div class="t" style="left:466.8px;top:282.65px;font-family:'Liberation Mono',monospace;font-size:13.67px;"><span style="color:#1A1ADC">&lt;</span><span style="color:#7F0A0A">p</span><span style="color:#1A1ADC">&gt;</span></div>
<div class="t" style="left:390px;top:302.0px;width:20px;text-align:right;color:#2A809F;font-family:'Liberation Mono',monospace;font-size:13.67px;">56</div>
<div class="t" style="left:499.6px;top:302.0px;font-family:'Liberation Mono',monospace;font-size:13.67px;"><span style="color:#1A1ADC">&lt;</span><span style="color:#7F0A0A">input</span> <span style="color:#E81E1E">id</span><span style="color:#1A1ADC">=</span><span style="color:#1A1ADC">"Text2"</span> <span style="color:#E81E1E">type</span><span style="color:#1A1ADC">=</span><span style="color:#1A1ADC">"text"</span> <span style="color:#1A1ADC">/&gt;</span><span style="color:#1A1ADC">&lt;/</span><span style="color:#7F0A0A">p</span><span style="color:#1A1ADC">&gt;</span></div>
<div class="t" style="left:390px;top:321.35px;width:20px;text-align:right;color:#2A809F;font-family:'Liberation Mono',monospace;font-size:13.67px;">57</div>
<div class="t" style="left:466.8px;top:321.35px;font-family:'Liberation Mono',monospace;font-size:13.67px;"><span style="color:#1A1ADC">&lt;</span><span style="color:#7F0A0A">p</span><span style="color:#1A1ADC">&gt;</span></div>
<div class="t" style="left:390px;top:340.7px;width:20px;text-align:right;color:#2A809F;font-family:'Liberation Mono',monospace;font-size:13.67px;">58</div>
<div class="t" style="left:499.6px;top:340.7px;font-family:'Liberation Mono',monospace;font-size:13.67px;"><span style="color:#1A1ADC">&lt;</span><span style="color:#7F0A0A">input</span> <span style="color:#E81E1E">id</span><span style="color:#1A1ADC">=</span><span style="color:#1A1ADC">"Button2"</span> <span style="color:#E81E1E">type</span><span style="color:#1A1ADC">=</span><span style="color:#1A1ADC">"button"</span> <span style="color:#E81E1E">value</span><span style="color:#1A1ADC">=</span><span style="color:#1A1ADC">"blue"</span> <span style="color:#1A1ADC">/&gt;</span><span style="color:#1A1ADC">&lt;/</span><span style="color:#7F0A0A">p</span><span style="color:#1A1ADC">&gt;</span></div>
<div class="t" style="left:390px;top:360.05px;width:20px;text-align:right;color:#2A809F;font-family:'Liberation Mono',monospace;font-size:13.67px;">59</div>
<div class="t" style="left:466.8px;top:360.05px;font-family:'Liberation Mono',monospace;font-size:13.67px;"><span style="color:#1A1ADC">&lt;</span><span style="color:#7F0A0A">p</span><span style="color:#1A1ADC">&gt;</span></div>
<div class="t" style="left:390px;top:379.4px;width:20px;text-align:right;color:#2A809F;font-family:'Liberation Mono',monospace;font-size:13.67px;">60</div>
<div class="t" style="left:499.6px;top:379.4px;font-family:'Liberation Mono',monospace;font-size:13.67px;"><span style="color:#1A1ADC">&lt;</span><span style="color:#7F0A0A">input</span> <span style="color:#E81E1E">id</span><span style="color:#1A1ADC">=</span><span style="color:#1A1ADC">"Button3"</span> <span style="color:#E81E1E">type</span><span style="color:#1A1ADC">=</span><span style="color:#1A1ADC">"button"</span> <span style="color:#E81E1E">value</span><span style="color:#1A1ADC">=</span><span style="color:#1A1ADC">"black"</span> <span style="color:#1A1ADC">/&gt;</span><span style="color:#1A1ADC">&lt;/</span><span style="color:#7F0A0A">p</span><span style="color:#1A1ADC">&gt;</span></div>
<div class="t" style="left:390px;top:398.75px;width:20px;text-align:right;color:#2A809F;font-family:'Liberation Mono',monospace;font-size:13.67px;">61</div>
<div class="t" style="left:434.0px;top:398.75px;font-family:'Liberation Mono',monospace;font-size:13.67px;"><span style="color:#1A1ADC">&lt;/</span><span style="color:#7F0A0A">body</span><span style="color:#1A1ADC">&gt;</span></div>
<div class="t" style="left:390px;top:418.1px;width:20px;text-align:right;color:#2A809F;font-family:'Liberation Mono',monospace;font-size:13.67px;">62</div>
<div class="t" style="left:434.0px;top:418.1px;font-family:'Liberation Mono',monospace;font-size:13.67px;"><span style="color:#1A1ADC">&lt;/</span><span style="color:#7F0A0A">html</span><span style="color:#1A1ADC">&gt;</span></div>
<div class="t" style="left:390px;top:437.45px;width:20px;text-align:right;color:#2A809F;font-family:'Liberation Mono',monospace;font-size:13.67px;">63</div>
<div style="position:absolute;left:432px;top:433px;width:1034px;height:20px;border:1px solid #D8D8D8;box-sizing:border-box;"></div>
<div style="position:absolute;left:434px;top:435px;width:2px;height:18px;background:#000;"></div>
<div style="position:absolute;left:427px;top:120px;width:1px;height:303px;background:#959595;"></div>
<div style="position:absolute;left:427px;top:201px;width:5px;height:1px;background:#959595;"></div>
<div style="position:absolute;left:427px;top:413px;width:5px;height:1px;background:#959595;"></div>
<div style="position:absolute;left:427px;top:432px;width:5px;height:1px;background:#959595;"></div>
<svg style="position:absolute;left:422px;top:110px;" width="10" height="10" viewBox="0 0 10 10"><rect x="0.5" y="0.5" width="9" height="9" fill="#FFF" stroke="#8A8A8A"/><path d="M2.5 5 H7.5" stroke="#333"/></svg>
<svg style="position:absolute;left:422px;top:130px;" width="10" height="10" viewBox="0 0 10 10"><rect x="0.5" y="0.5" width="9" height="9" fill="#FFF" stroke="#8A8A8A"/><path d="M2.5 5 H7.5" stroke="#333"/></svg>
<div style="position:absolute;left:414px;top:203px;width:5px;height:211px;background:#F5DB4B;"></div>
<svg style="position:absolute;left:879px;top:428px;" width="9" height="18" viewBox="0 0 9 18"><path d="M1 1 H3 Q4.5 1 4.5 3 V15 Q4.5 17 3 17 H1 M8 1 H6 Q4.5 1 4.5 3 M8 17 H6 Q4.5 17 4.5 15 M2.5 9 H6.5" fill="none" stroke="#111" stroke-width="1.2"/></svg>
<div style="position:absolute;left:1466px;top:105px;width:22px;height:496px;background:#E8E8EC;"></div>
<div style="position:absolute;left:1466px;top:105px;width:22px;height:25px;background:#EEF0F8;border-bottom:1px solid #C6C9D6;box-sizing:border-box;"></div>
<svg style="position:absolute;left:1469px;top:108px;" width="16" height="18" viewBox="0 0 16 18"><path d="M1 8 H15 M1 10 H15" stroke="#111" stroke-width="1.5"/><path d="M8 1 V7 M8 11 V17" stroke="#111" stroke-width="1.3"/><path d="M5 4 L8 0.5 L11 4 Z M5 14 L8 17.5 L11 14 Z" fill="#111"/></svg>
<svg style="position:absolute;left:1472px;top:137px;" width="10" height="6" viewBox="0 0 10 6"><path d="M0 6 H10 L5 0 Z" fill="#777"/></svg>
<div style="position:absolute;left:1469px;top:370px;width:14px;height:125px;background:#A8A8AE;"></div>
<div style="position:absolute;left:1469px;top:178px;width:4px;height:192px;background:#F5DB4B;"></div>
<div style="position:absolute;left:1469px;top:392px;width:4px;height:57px;background:#F5DB4B;"></div>
<div style="position:absolute;left:1466px;top:453px;width:22px;height:2px;background:#1B2FC2;"></div>
<svg style="position:absolute;left:1472px;top:588px;" width="10" height="6" viewBox="0 0 10 6"><path d="M0 0 H10 L5 6 Z" fill="#777"/></svg>
<div style="position:absolute;left:350px;top:601px;width:1116px;height:20px;background:#E2E3E8;"></div>
<div style="position:absolute;left:1466px;top:601px;width:22px;height:20px;background:#E2E3E8;"></div>
<div style="position:absolute;left:350px;top:601px;width:68px;height:20px;background:#FFFFFF;border:1px solid #D0D2DA;box-sizing:border-box;"></div>
<div class="t" style="left:353px;top:605px;font-size:13px;">100 %</div>
<svg style="position:absolute;left:406px;top:609px;" width="7" height="4" viewBox="0 0 7 4"><path d="M0 0 H7 L3.5 4 Z" fill="#1E1E1E"/></svg>
<svg style="position:absolute;left:444px;top:603px;" width="14" height="14" viewBox="0 0 14 14"><circle cx="7" cy="7" r="7" fill="#2E8B47"/><path d="M3.5 7 L6 9.5 L10.5 4.5" stroke="#FFF" stroke-width="1.8" fill="none"/></svg>
<div class="t" style="left:464px;top:605px;font-size:12.4px;">No issues found</div>
<svg style="position:absolute;left:646px;top:607px;" width="5" height="8" viewBox="0 0 5 8"><path d="M5 0 V8 L0 4 Z" fill="#555"/></svg>
<div style="position:absolute;left:659px;top:606px;width:493px;height:10px;background:#B3B4BA;"></div>
<svg style="position:absolute;left:1260px;top:607px;" width="5" height="8" viewBox="0 0 5 8"><path d="M0 0 V8 L5 4 Z" fill="#555"/></svg>
<div class="t" style="left:1297px;top:605px;font-size:12.4px;">Ln: 63</div>
<div class="t" style="left:1353px;top:605px;font-size:13px;">Ch: 1</div>
<div class="t" style="left:1404px;top:605px;font-size:13px;">SPC</div>
<div class="t" style="left:1449px;top:606px;font-size:11.2px;">CRLF</div>
<div style="position:absolute;left:350px;top:621px;width:1138px;height:27px;background:#F5F6FA;"></div>
<svg style="position:absolute;left:360px;top:630px;" width="9" height="9" viewBox="0 0 9 9"><rect x="0.6" y="0.6" width="7" height="6.5" fill="none" stroke="#333" stroke-width="1.2"/><rect x="0.6" y="0.6" width="7" height="2" fill="#333"/><circle cx="6.5" cy="6.5" r="2.5" fill="#333"/></svg>
<div class="t" style="left:375px;top:628px;font-size:13.2px;">Design</div>
<div style="position:absolute;left:428px;top:626px;width:1px;height:19px;background:#B3B7C4;"></div>
<svg style="position:absolute;left:434px;top:630px;" width="9" height="9" viewBox="0 0 9 9"><rect x="0.6" y="0.6" width="7.8" height="7.8" fill="none" stroke="#333" stroke-width="1.2"/><path d="M2.5 3.5 H6.5 M2.5 5.5 H6.5" stroke="#333" stroke-width="1"/></svg>
<div class="t" style="left:448px;top:628px;font-size:13.6px;">Split</div>
<div style="position:absolute;left:487px;top:623px;width:73px;height:24px;border:1px solid #2F73C8;background:#FFFFFF;box-sizing:border-box;"></div>
<svg style="position:absolute;left:493px;top:632px;" width="9" height="6" viewBox="0 0 9 6"><path d="M3 0.5 L0.8 3 L3 5.5 M6 0.5 L8.2 3 L6 5.5" stroke="#444" stroke-width="1.5" fill="none"/></svg>
<div class="t" style="left:508px;top:628px;font-size:13px;">Source</div>
<div style="position:absolute;left:350px;top:657px;width:1138px;height:24px;background:#2F4986;"></div>
<div class="t" style="left:354px;top:663px;color:#DDE4F7;-webkit-text-stroke:0.1px;font-size:12.9px;">Error List ...</div>
<svg style="position:absolute;left:1432px;top:666px;" width="8" height="5" viewBox="0 0 8 5"><path d="M0 0 H8 L4 5 Z" fill="#9AABDB"/></svg>
<svg style="position:absolute;left:1450px;top:662px;" width="8" height="13" viewBox="0 0 8 13"><path d="M1.5 0.5 H6.5 M2.5 0.5 V7 M5.5 0.5 V7 M0.5 7.5 H7.5 M4 7.5 V12.5" fill="none" stroke="#9AABDB" stroke-width="1.2"/></svg>
<svg style="position:absolute;left:1469px;top:664px;" width="10" height="9" viewBox="0 0 10 9"><path d="M0.5 0.5 L9.5 8.5 M9.5 0.5 L0.5 8.5" stroke="#9AABDB" stroke-width="1.2"/></svg>
<div style="position:absolute;left:350px;top:681px;width:1138px;height:29px;background:#BEC7E2;"></div>
<div style="position:absolute;left:356px;top:685px;width:173px;height:21px;background:#EDF0FA;"></div>
<div class="t" style="left:363px;top:690px;font-size:13.5px;">Entire Solution</div>
<svg style="position:absolute;left:516px;top:694px;" width="7" height="4" viewBox="0 0 7 4"><path d="M0 0 H7 L3.5 4 Z" fill="#1E1E1E"/></svg>
<div style="position:absolute;left:536px;top:685px;width:1px;height:21px;background:#8D98B8;"></div>
<div style="position:absolute;left:541px;top:684px;width:81px;height:24px;background:#F8DDB3;border:1px solid #E6BE82;box-sizing:border-box;"></div>
<svg style="position:absolute;left:547px;top:688px;" width="16" height="16" viewBox="0 0 16 16"><circle cx="8" cy="8" r="7.8" fill="#E0282E"/><path d="M4.8 4.8 L11.2 11.2 M11.2 4.8 L4.8 11.2" stroke="#FFF" stroke-width="2.2"/></svg>
<div class="t" style="left:568px;top:690px;font-size:12.8px;">0 Errors</div>
<div style="position:absolute;left:626px;top:685px;width:1px;height:21px;background:#8D98B8;"></div>
<div style="position:absolute;left:631px;top:684px;width:101px;height:24px;background:#F8DDB3;border:1px solid #E6BE82;box-sizing:border-box;"></div>
<svg style="position:absolute;left:636px;top:687px;" width="18" height="16" viewBox="0 0 18 16"><path d="M9 0 L18 16 H0 Z" fill="#F5C518"/><path d="M9 5 V11" stroke="#111" stroke-width="2"/><rect x="8" y="12.5" width="2" height="2" fill="#111"/></svg>
<div class="t" style="left:658px;top:690px;font-size:13.2px;">0 Warnings</div>
<div style="position:absolute;left:736px;top:685px;width:1px;height:21px;background:#8D98B8;"></div>
<svg style="position:absolute;left:746px;top:687px;" width="16" height="16" viewBox="0 0 16 16"><circle cx="8" cy="8" r="8" fill="#1F86D8"/><rect x="6.8" y="6.5" width="2.6" height="7" fill="#FFF"/><circle cx="8.1" cy="4" r="1.5" fill="#FFF"/></svg>
<div class="t" style="left:768px;top:690px;font-size:12.9px;">0 Messages</div>
<div style="position:absolute;left:850px;top:685px;width:1px;height:21px;background:#8D98B8;"></div>
<div style="position:absolute;left:854px;top:684px;width:26px;height:24px;background:#F8DDB3;border:1px solid #E6BE82;box-sizing:border-box;"></div>
<svg style="position:absolute;left:858px;top:687px;" width="18" height="17" viewBox="0 0 18 17"><path d="M0.5 0.5 L6 6 M6 0.5 L0.5 6" stroke="#C8282E" stroke-width="2"/><path d="M4 6 H17 L12.5 11 V16.5 L9 14.5 V11 Z" fill="#333"/></svg>
<div style="position:absolute;left:884px;top:685px;width:1px;height:21px;background:#8D98B8;"></div>
<div style="position:absolute;left:891px;top:685px;width:171px;height:21px;background:#EDF0FA;"></div>
<div class="t" style="left:896px;top:690px;font-size:13.5px;">Build + IntelliSense</div>
<svg style="position:absolute;left:1049px;top:694px;" width="7" height="4" viewBox="0 0 7 4"><path d="M0 0 H7 L3.5 4 Z" fill="#1E1E1E"/></svg>
<div style="position:absolute;left:1261px;top:684px;width:226px;height:23px;background:#F7F8FB;"></div>
<div class="t" style="left:1266px;top:690px;color:#6D6D6D;font-size:12.9px;">Search Error List</div>
<svg style="position:absolute;left:1455px;top:687px;" width="16" height="16" viewBox="0 0 16 16"><circle cx="10" cy="6" r="4" fill="none" stroke="#2B2B2B" stroke-width="2"/><path d="M7 9 L2 14" stroke="#2B2B2B" stroke-width="2.5"/></svg>
<svg style="position:absolute;left:1476px;top:694px;" width="6" height="4" viewBox="0 0 6 4"><path d="M0 0 H6 L3 4 Z" fill="#333"/></svg>
<div style="position:absolute;left:350px;top:710px;width:1138px;height:26px;background:#F0F0F2;border-bottom:1px solid #DADADF;box-sizing:border-box;"></div>
<div style="position:absolute;left:380px;top:711px;width:1px;height:24px;background:#CFCFD6;"></div>
<div style="position:absolute;left:410px;top:711px;width:1px;height:24px;background:#CFCFD6;"></div>
<div style="position:absolute;left:467px;top:711px;width:1px;height:24px;background:#CFCFD6;"></div>
<div style="position:absolute;left:936px;top:711px;width:1px;height:24px;background:#CFCFD6;"></div>
<div style="position:absolute;left:1106px;top:711px;width:1px;height:24px;background:#CFCFD6;"></div>
<div style="position:absolute;left:1277px;top:711px;width:1px;height:24px;background:#CFCFD6;"></div>
<div style="position:absolute;left:1316px;top:711px;width:1px;height:24px;background:#CFCFD6;"></div>
<div style="position:absolute;left:1459px;top:711px;width:1px;height:24px;background:#CFCFD6;"></div>
<div style="position:absolute;left:1486px;top:711px;width:1px;height:24px;background:#CFCFD6;"></div>
<svg style="position:absolute;left:399px;top:714px;" width="7" height="7" viewBox="0 0 7 7"><path d="M0 0.5 H6 M3 3 H6 M4.5 5.5 H6" stroke="#333" stroke-width="1.2"/></svg>
<div class="t" style="left:415px;top:717px;font-size:13.2px;">Code</div>
<div class="t" style="left:472px;top:717px;font-size:13.2px;">Description</div>
<div class="t" style="left:941px;top:717px;font-size:13.2px;">Project</div>
<div class="t" style="left:1111px;top:717px;font-size:13.2px;">File</div>
<div class="t" style="left:1282px;top:717px;font-size:13.2px;">Line</div>
<div class="t" style="left:1322px;top:717px;font-size:13.2px;">Suppression State</div>
<div style="position:absolute;left:350px;top:736px;width:1138px;height:137px;background:#FFFFFF;"></div>
<div style="position:absolute;left:1497px;top:82px;width:243px;height:23px;background:#2F4986;"></div>
<div class="t" style="left:1501px;top:87px;color:#DDE4F7;-webkit-text-stroke:0.1px;font-size:13.6px;">Solution Explorer</div>
<svg style="position:absolute;left:1683px;top:91px;" width="8" height="5" viewBox="0 0 8 5"><path d="M0 0 H8 L4 5 Z" fill="#9AABDB"/></svg>
<svg style="position:absolute;left:1701px;top:87px;" width="8" height="13" viewBox="0 0 8 13"><path d="M1.5 0.5 H6.5 M2.5 0.5 V7 M5.5 0.5 V7 M0.5 7.5 H7.5 M4 7.5 V12.5" fill="none" stroke="#9AABDB" stroke-width="1.2"/></svg>
<svg style="position:absolute;left:1720px;top:89px;" width="10" height="9" viewBox="0 0 10 9"><path d="M0.5 0.5 L9.5 8.5 M9.5 0.5 L0.5 8.5" stroke="#9AABDB" stroke-width="1.2"/></svg>
<div style="position:absolute;left:1497px;top:105px;width:243px;height:33px;background:#BEC7E2;"></div>
<svg style="position:absolute;left:1506px;top:115px;" width="14" height="14" viewBox="0 0 14 14"><circle cx="7" cy="7" r="6.5" fill="#A7AEC0"/><path d="M3.5 7 H10.5 M3.5 7 L6.5 4 M3.5 7 L6.5 10" stroke="#C9D0E4" stroke-width="1.8" fill="none"/></svg>
<svg style="position:absolute;left:1531px;top:115px;" width="14" height="14" viewBox="0 0 14 14"><circle cx="7" cy="7" r="6.5" fill="#A7AEC0"/><path d="M3.5 7 H10.5 M10.5 7 L7.5 4 M10.5 7 L7.5 10" stroke="#C9D0E4" stroke-width="1.8" fill="none"/></svg>
<svg style="position:absolute;left:1554px;top:113px;" width="16" height="16" viewBox="0 0 16 16"><path d="M1 8.5 L8 1.5 L15 8.5 H13.5 V15 H2.5 V8.5 Z" fill="#DADDE8" stroke="#222" stroke-width="1.4" stroke-linejoin="miter"/><path d="M11.5 1 V5" stroke="#222" stroke-width="1.3"/><rect x="6" y="10" width="3.5" height="5" fill="#222"/></svg>
<svg style="position:absolute;left:1578px;top:113px;" width="16" height="16" viewBox="0 0 16 16"><rect x="5.5" y="0.5" width="10" height="13" fill="#DADDE8" stroke="#333" stroke-width="1.2"/><rect x="5.5" y="0.5" width="10" height="2.5" fill="#333"/><path d="M8 5 H14 M8 7.5 H14 M8 10 H14" stroke="#555" stroke-width="1"/><g transform="translate(0,6) scale(0.42)"><path d="M17 1 L24 4 V19 L17 22 L6 14 L2 17 L0 16 V7 L2 6 L6 9 Z M17 7 L10 11.5 L17 16 Z M3 9 V14 L5.5 11.5 Z" fill="#8E44CC" fill-rule="evenodd"/></g></svg>
<div style="position:absolute;left:1603px;top:110px;width:1px;height:22px;background:#9AA3BE;"></div>
<svg style="position:absolute;left:1614px;top:112px;" width="18" height="18" viewBox="0 0 18 18"><circle cx="10" cy="10" r="6" fill="none" stroke="#333" stroke-width="1.5"/><path d="M10 6 V10 H13" stroke="#333" stroke-width="1.3" fill="none"/><path d="M1 1 H5 M3 1 V5" stroke="#333" stroke-width="1.2"/></svg>
<svg style="position:absolute;left:1636px;top:121px;" width="7" height="4" viewBox="0 0 7 4"><path d="M0 0 H7 L3.5 4 Z" fill="#333"/></svg>
<svg style="position:absolute;left:1650px;top:113px;" width="18" height="16" viewBox="0 0 18 16"><path d="M2 5 H15 M2 5 L6 1 M16 11 H3 M16 11 L12 15" stroke="#222" stroke-width="1.8" fill="none"/></svg>
<svg style="position:absolute;left:1674px;top:112px;" width="17" height="18" viewBox="0 0 17 18"><path d="M14 8 A6 6 0 1 1 10 3" stroke="#0D4A8C" stroke-width="2.4" fill="none"/><path d="M8 0 L14 3 L9 7 Z" fill="#0D4A8C"/></svg>
<svg style="position:absolute;left:1700px;top:114px;" width="15" height="14" viewBox="0 0 15 14"><rect x="1" y="5" width="9" height="8" fill="none" stroke="#333" stroke-width="1.3"/><path d="M4 5 V2 H13 V10 H10" fill="none" stroke="#333" stroke-width="1.3"/><path d="M3 9 H8" stroke="#333"/></svg>
<svg style="position:absolute;left:1729px;top:111px;" width="8" height="3" viewBox="0 0 8 3"><rect x="0" y="0" width="2" height="2" fill="#333"/><rect x="5" y="0" width="2" height="2" fill="#333"/></svg>
<div style="position:absolute;left:1497px;top:138px;width:243px;height:24px;background:#F7F8FB;border-bottom:1px solid #C9CFE0;box-sizing:border-box;"></div>
<div class="t" style="left:1503px;top:143px;color:#6D6D6D;font-size:13.3px;">Search Solution Explorer (Ctrl+;)</div>
<svg style="position:absolute;left:1708px;top:142px;" width="16" height="16" viewBox="0 0 16 16"><circle cx="10" cy="6" r="4" fill="none" stroke="#2B2B2B" stroke-width="2"/><path d="M7 9 L2 14" stroke="#2B2B2B" stroke-width="2.5"/></svg>
<svg style="position:absolute;left:1727px;top:149px;" width="6" height="4" viewBox="0 0 6 4"><path d="M0 0 H6 L3 4 Z" fill="#333"/></svg>
<div style="position:absolute;left:1497px;top:162px;width:243px;height:225px;background:#F3F4F8;"></div>
<div style="position:absolute;left:1497px;top:270px;width:243px;height:21px;background:#E1E2E7;"></div>
<div style="position:absolute;left:1497px;top:162px;width:243px;height:208px;overflow:hidden;">
<div class="t" style="left:37px;top:7px;font-size:13.4px;">Solution &#x27;MyFirsrJavaScriptWebPage&#x27; (1 of 1 project)</div>
<div class="t" style="left:58px;top:28px;font-size:13.4px;font-weight:bold;-webkit-text-stroke:0;">MyFirsrJavaScriptWebPage</div>
<div class="t" style="left:78px;top:49px;font-size:13.4px;">Connected Services</div>
<div class="t" style="left:78px;top:70px;font-size:13.4px;">My Project</div>
<div class="t" style="left:78px;top:91px;font-size:13.4px;">References</div>
<div class="t" style="left:78px;top:112px;font-size:13.4px;">Default.aspx</div>
<div class="t" style="left:78px;top:133px;font-size:13.4px;">packages.config</div>
<div class="t" style="left:78px;top:154px;font-size:13.4px;">Web.config</div>
</div>
<svg style="position:absolute;left:1512px;top:168px;" width="17" height="16" viewBox="0 0 17 16"><rect x="1" y="1" width="15" height="13" fill="#F5F6FA" stroke="#444" stroke-width="1.3"/><rect x="1" y="1" width="15" height="2.5" fill="#444"/><rect x="0" y="7" width="9" height="9" fill="#F5F6FA"/><g transform="translate(0,7) scale(0.38)"><path d="M17 1 L24 4 V19 L17 22 L6 14 L2 17 L0 16 V7 L2 6 L6 9 Z M17 7 L10 11.5 L17 16 Z M3 9 V14 L5.5 11.5 Z" fill="#8E44CC" fill-rule="evenodd"/></g></svg>
<svg style="position:absolute;left:1509px;top:191px;" width="8" height="8" viewBox="0 0 8 8"><path d="M8 0 V8 H0 Z" fill="#222"/></svg>
<svg style="position:absolute;left:1532px;top:189px;" width="17" height="16" viewBox="0 0 17 16"><rect x="2" y="0.7" width="14.3" height="13" fill="#F5F6FA" stroke="#444" stroke-width="1.3"/><rect x="2" y="0.7" width="14.3" height="2.6" fill="#444"/><circle cx="5.5" cy="10.5" r="5.2" fill="#2C7BC6"/><path d="M0.5 10.5 H10.5 M5.5 5.3 V15.7 M1.3 8 H9.7 M1.3 13 H9.7" stroke="#CFE3F5" stroke-width="0.7"/><ellipse cx="5.5" cy="10.5" rx="2.3" ry="5" fill="none" stroke="#CFE3F5" stroke-width="0.7"/></svg>
<svg style="position:absolute;left:1552px;top:209px;" width="17" height="16" viewBox="0 0 17 16"><path d="M4 11 Q0 11 1 7 Q2 4 5 5 Q6 1 10 2 Q14 3 13 7 Q17 7 16 11 H12" fill="none" stroke="#333" stroke-width="1.3"/><path d="M8.5 7 V15 M6 12 L8.5 15 L11 12" stroke="#333" stroke-width="1.3" fill="none"/></svg>
<svg style="position:absolute;left:1552px;top:230px;" width="17" height="17" viewBox="0 0 17 17"><path d="M2 15 L9 8" stroke="#222" stroke-width="3"/><path d="M8 8 Q6 3 10 1 L11 4 L13 5 L16 4 Q15 9 9 9 Z" fill="#222"/></svg>
<svg style="position:absolute;left:1529px;top:252px;" width="8" height="11" viewBox="0 0 8 11"><path d="M1 1 L7 5.5 L1 10 Z" fill="none" stroke="#222" stroke-width="1.3"/></svg>
<svg style="position:absolute;left:1552px;top:254px;" width="17" height="10" viewBox="0 0 17 10"><rect x="1" y="2" width="5" height="5" fill="#222"/><rect x="10" y="1" width="7" height="7" fill="#222"/><path d="M6 4.5 H10" stroke="#222"/></svg>
<svg style="position:absolute;left:1552px;top:271px;" width="17" height="17" viewBox="0 0 17 17"><path d="M5 1 H12 L16 5 V16 H6" fill="none" stroke="#333" stroke-width="1.2"/><path d="M11.5 1 V5.5 H16" fill="none" stroke="#333" stroke-width="1"/><circle cx="5.5" cy="11.5" r="5" fill="#2C7BC6"/><path d="M0.5 11.5 H10.5 M5.5 6.5 V16.5 M1.3 9 H9.7 M1.3 14 H9.7" stroke="#CFE3F5" stroke-width="0.7"/></svg>
<svg style="position:absolute;left:1552px;top:292px;" width="17" height="17" viewBox="0 0 17 17"><path d="M5 1 H12 L16 5 V16 H6" fill="none" stroke="#333" stroke-width="1.2"/><path d="M3 5 Q1 8 4 10 V16 M6 5 Q8 8 4 10" fill="none" stroke="#222" stroke-width="1.6"/></svg>
<svg style="position:absolute;left:1552px;top:313px;" width="17" height="17" viewBox="0 0 17 17"><path d="M5 1 H12 L16 5 V16 H6" fill="none" stroke="#333" stroke-width="1.2"/><path d="M3 5 Q1 8 4 10 V16 M6 5 Q8 8 4 10" fill="none" stroke="#222" stroke-width="1.6"/></svg>
<div style="position:absolute;left:1497px;top:369px;width:243px;height:18px;background:#E4E5EA;"></div>
<svg style="position:absolute;left:1503px;top:373px;" width="7" height="10" viewBox="0 0 7 10"><path d="M7 0 V10 L0 5 Z" fill="#555"/></svg>
<div style="position:absolute;left:1515px;top:373px;width:143px;height:10px;background:#ABABB2;"></div>
<svg style="position:absolute;left:1726px;top:373px;" width="7" height="10" viewBox="0 0 7 10"><path d="M0 0 V10 L7 5 Z" fill="#555"/></svg>
<div style="position:absolute;left:1497px;top:387px;width:58px;height:22px;background:#F5F6FA;"></div>
<div class="t" style="left:1502px;top:392px;font-size:13.5px;">Soluti...</div>
<div style="position:absolute;left:1556px;top:387px;width:61px;height:21px;background:#314B8A;"></div>
<div class="t" style="left:1562px;top:392px;color:#DCE2F3;-webkit-text-stroke:0.1px;font-size:13.5px;">Git Ch...</div>
<div style="position:absolute;left:1619px;top:387px;width:58px;height:21px;background:#314B8A;"></div>
<div class="t" style="left:1625px;top:392px;color:#DCE2F3;-webkit-text-stroke:0.1px;font-size:13.5px;">Team...</div>
<div style="position:absolute;left:1679px;top:387px;width:61px;height:21px;background:#314B8A;"></div>
<div class="t" style="left:1685px;top:392px;color:#DCE2F3;-webkit-text-stroke:0.1px;font-size:13.5px;">Class...</div>
<div style="position:absolute;left:1497px;top:419px;width:243px;height:23px;background:#2F4986;"></div>
<div class="t" style="left:1501px;top:424px;color:#DDE4F7;-webkit-text-stroke:0.1px;font-size:13.4px;">Properties</div>
<svg style="position:absolute;left:1683px;top:428px;" width="8" height="5" viewBox="0 0 8 5"><path d="M0 0 H8 L4 5 Z" fill="#9AABDB"/></svg>
<svg style="position:absolute;left:1701px;top:424px;" width="8" height="13" viewBox="0 0 8 13"><path d="M1.5 0.5 H6.5 M2.5 0.5 V7 M5.5 0.5 V7 M0.5 7.5 H7.5 M4 7.5 V12.5" fill="none" stroke="#9AABDB" stroke-width="1.2"/></svg>
<svg style="position:absolute;left:1720px;top:426px;" width="10" height="9" viewBox="0 0 10 9"><path d="M0.5 0.5 L9.5 8.5 M9.5 0.5 L0.5 8.5" stroke="#9AABDB" stroke-width="1.2"/></svg>
<div style="position:absolute;left:1497px;top:442px;width:243px;height:28px;background:#FBFBFD;"></div>
<div class="t" style="left:1512px;top:450px;font-size:12.7px;">DOCUMENT</div>
<svg style="position:absolute;left:1727px;top:454px;" width="6" height="4" viewBox="0 0 6 4"><path d="M0 0 H6 L3 4 Z" fill="#222"/></svg>
<div style="position:absolute;left:1497px;top:470px;width:243px;height:28px;background:#BEC7E2;"></div>
<svg style="position:absolute;left:1504px;top:476px;" width="16" height="15" viewBox="0 0 16 15"><rect x="0.5" y="1.5" width="3" height="3" fill="none" stroke="#222"/><rect x="0.5" y="10.5" width="3" height="3" fill="none" stroke="#222"/><path d="M6 1 H15 M6 4 H15 M6 7 H15 M6 10 H15 M6 13 H15" stroke="#333" stroke-width="1.4"/></svg>
<div style="position:absolute;left:1526px;top:472px;width:26px;height:24px;background:#F8DDB3;border:1px solid #E6BE82;box-sizing:border-box;"></div>
<svg style="position:absolute;left:1530px;top:475px;" width="19" height="18" viewBox="0 0 19 18"><rect x="4" y="1" width="7" height="7" fill="#444"/><path d="M5.5 7 L7.5 2.5 L9.5 7" stroke="#D8D8D8" stroke-width="1" fill="none"/><path d="M4.5 10 H10.5 L4.5 16 H10.5" stroke="#333" stroke-width="2.2" fill="none"/><path d="M14 4 V11" stroke="#0D4A9C" stroke-width="3"/><path d="M10.5 10.5 H17.5 L14 15 Z" fill="#0D4A9C"/></svg>
<div style="position:absolute;left:1555px;top:473px;width:1px;height:22px;background:#9AA3BE;"></div>
<svg style="position:absolute;left:1562px;top:474px;" width="18" height="18" viewBox="0 0 18 18"><path d="M2 16 L9 9" stroke="#7F8596" stroke-width="3"/><path d="M8 9 Q6 4 10 2 L11 5 L13 6 L16 5 Q15 10 9 10 Z" fill="#7F8596"/></svg>
<div style="position:absolute;left:1497px;top:498px;width:243px;height:304px;background:#EDEDF1;"></div>
<div style="position:absolute;left:1513px;top:498px;width:207px;height:304px;background:#F7F7F9;"></div>
<div style="position:absolute;left:1513px;top:499px;width:207px;height:302px;overflow:hidden;">
<div style="position:absolute;left:0;top:0.00px;width:207px;height:21px;border-bottom:1px solid #E8E8EC;box-sizing:border-box;"></div>
<div class="t" style="left:4px;top:5.00px;font-size:13px;width:85px;overflow:hidden;">(id)</div>
<div class="t" style="left:94px;top:5.00px;font-size:13.4px;">Button3</div>
<div style="position:absolute;left:0;top:20.95px;width:207px;height:21px;border-bottom:1px solid #E8E8EC;box-sizing:border-box;"></div>
<div class="t" style="left:4px;top:25.95px;font-size:13px;width:85px;overflow:hidden;">accept</div>
<div class="t" style="left:94px;top:25.95px;font-size:13.4px;"></div>
<div style="position:absolute;left:0;top:41.90px;width:207px;height:21px;border-bottom:1px solid #E8E8EC;box-sizing:border-box;"></div>
<div class="t" style="left:4px;top:46.90px;font-size:13px;width:85px;overflow:hidden;">accesskey</div>
<div class="t" style="left:94px;top:46.90px;font-size:13.4px;"></div>
<div style="position:absolute;left:0;top:62.85px;width:207px;height:21px;border-bottom:1px solid #E8E8EC;box-sizing:border-box;"></div>
<div class="t" style="left:4px;top:67.85px;font-size:13px;width:85px;overflow:hidden;">alt</div>
<div class="t" style="left:94px;top:67.85px;font-size:13.4px;"></div>
<div style="position:absolute;left:0;top:83.80px;width:207px;height:21px;border-bottom:1px solid #E8E8EC;box-sizing:border-box;"></div>
<div class="t" style="left:4px;top:88.80px;font-size:13px;width:85px;overflow:hidden;">aria-activedes</div>
<div class="t" style="left:94px;top:88.80px;font-size:13.4px;"></div>
<div style="position:absolute;left:0;top:104.75px;width:207px;height:21px;border-bottom:1px solid #E8E8EC;box-sizing:border-box;"></div>
<div class="t" style="left:4px;top:109.75px;font-size:13px;width:85px;overflow:hidden;">aria-atomic</div>
<div class="t" style="left:94px;top:109.75px;font-size:13.4px;">False</div>
<div style="position:absolute;left:0;top:125.70px;width:207px;height:21px;border-bottom:1px solid #E8E8EC;box-sizing:border-box;"></div>
<div class="t" style="left:4px;top:130.70px;font-size:13px;width:85px;overflow:hidden;">aria-autocomp</div>
<div class="t" style="left:94px;top:130.70px;font-size:13.4px;">none</div>
<div style="position:absolute;left:0;top:146.65px;width:207px;height:21px;border-bottom:1px solid #E8E8EC;box-sizing:border-box;"></div>
<div class="t" style="left:4px;top:151.65px;font-size:13px;width:85px;overflow:hidden;">aria-busy</div>
<div class="t" style="left:94px;top:151.65px;font-size:13.4px;">False</div>
<div style="position:absolute;left:0;top:167.60px;width:207px;height:21px;border-bottom:1px solid #E8E8EC;box-sizing:border-box;"></div>
<div class="t" style="left:4px;top:172.60px;font-size:13px;width:85px;overflow:hidden;">aria-checked</div>
<div class="t" style="left:94px;top:172.60px;font-size:13.4px;">undefined</div>
<div style="position:absolute;left:0;top:188.55px;width:207px;height:21px;border-bottom:1px solid #E8E8EC;box-sizing:border-box;"></div>
<div class="t" style="left:4px;top:193.55px;font-size:13px;width:85px;overflow:hidden;">aria-controls</div>
<div class="t" style="left:94px;top:193.55px;font-size:13.4px;"></div>
<div style="position:absolute;left:0;top:209.50px;width:207px;height:21px;border-bottom:1px solid #E8E8EC;box-sizing:border-box;"></div>
<div class="t" style="left:4px;top:214.50px;font-size:13px;width:85px;overflow:hidden;">aria-described</div>
<div class="t" style="left:94px;top:214.50px;font-size:13.4px;"></div>
<div style="position:absolute;left:0;top:230.45px;width:207px;height:21px;border-bottom:1px solid #E8E8EC;box-sizing:border-box;"></div>
<div class="t" style="left:4px;top:235.45px;font-size:13px;width:85px;overflow:hidden;">aria-disabled</div>
<div class="t" style="left:94px;top:235.45px;font-size:13.4px;">False</div>
<div style="position:absolute;left:0;top:251.40px;width:207px;height:21px;border-bottom:1px solid #E8E8EC;box-sizing:border-box;"></div>
<div class="t" style="left:4px;top:256.40px;font-size:13px;width:85px;overflow:hidden;">aria-dropeffec</div>
<div class="t" style="left:94px;top:256.40px;font-size:13.4px;">none</div>
<div style="position:absolute;left:0;top:272.35px;width:207px;height:21px;border-bottom:1px solid #E8E8EC;box-sizing:border-box;"></div>
<div class="t" style="left:4px;top:277.35px;font-size:13px;width:85px;overflow:hidden;">aria-expandec</div>
<div class="t" style="left:94px;top:277.35px;font-size:13.4px;">undefined</div>
<div style="position:absolute;left:0;top:293.30px;width:207px;height:21px;border-bottom:1px solid #E8E8EC;box-sizing:border-box;"></div>
<div class="t" style="left:4px;top:298.30px;font-size:13px;width:85px;overflow:hidden;">aria-flowto</div>
<div class="t" style="left:94px;top:298.30px;font-size:13.4px;"></div>
</div>
<div style="position:absolute;left:1513px;top:499px;width:90px;height:21px;background:#E6E6EA;"></div>
<div class="t" style="left:1517px;top:504px;font-size:13px;">(id)</div>
<div style="position:absolute;left:1603px;top:499px;width:1px;height:302px;background:#E2E2E6;"></div>
<div style="position:absolute;left:1720px;top:498px;width:20px;height:304px;background:#E8E8EC;"></div>
<svg style="position:absolute;left:1724px;top:505px;" width="10" height="6" viewBox="0 0 10 6"><path d="M0 6 H10 L5 0 Z" fill="#555"/></svg>
<div style="position:absolute;left:1725px;top:518px;width:9px;height:40px;background:#ABABB2;"></div>
<svg style="position:absolute;left:1724px;top:789px;" width="10" height="6" viewBox="0 0 10 6"><path d="M0 0 H10 L5 6 Z" fill="#555"/></svg>
<div style="position:absolute;left:1497px;top:802px;width:243px;height:71px;background:#F4F5F9;"></div>
<div class="t" style="left:1505px;top:813px;font-size:13.5px;font-weight:bold;-webkit-text-stroke:0;">(id)</div>
<div style="position:absolute;left:1747px;top:0px;width:1px;height:73px;background:#CBD1E4;"></div>
<div style="position:absolute;left:1747px;top:73px;width:1px;height:837px;background:#35416A;"></div>
</body></html>
